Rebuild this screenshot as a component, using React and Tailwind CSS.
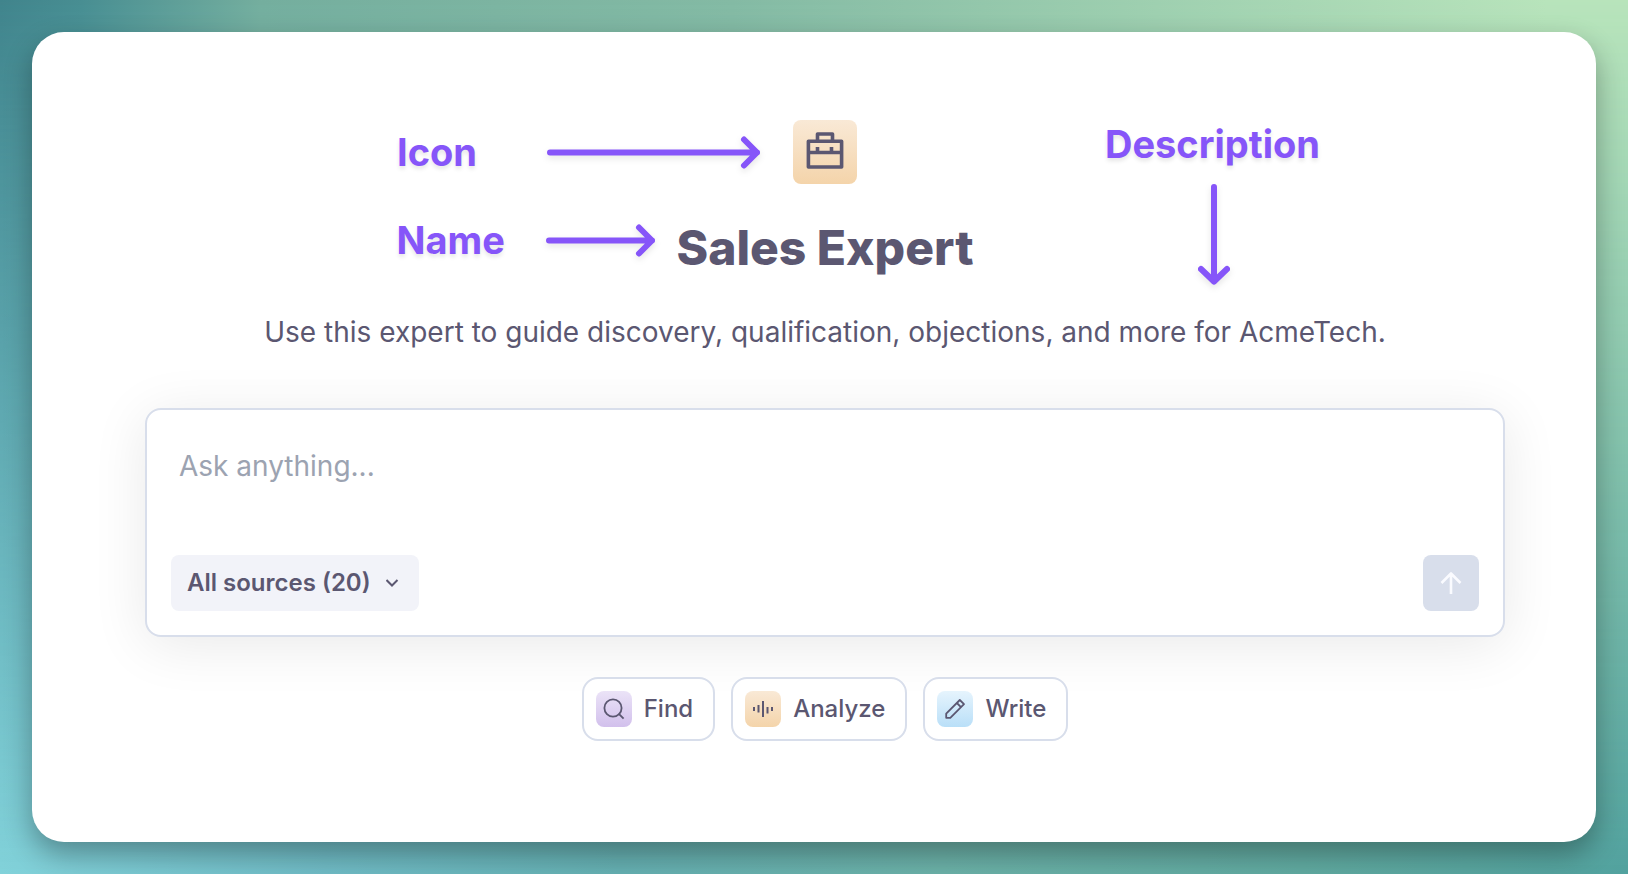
import React, { useState } from 'react'

function RightArrow({ className, length }) {
  const tip = length - 4
  return (
    <svg
      className={className}
      width={length}
      height="34"
      viewBox={`0 0 ${length} 34`}
      fill="none"
      stroke="#8655f9"
      strokeWidth="6"
      strokeLinecap="round"
      strokeLinejoin="round"
      aria-hidden="true"
    >
      <path d={`M3 17.5H${tip}M${tip - 13} 4.5L${tip} 17.5L${tip - 13} 30.5`} />
    </svg>
  )
}

function DownArrow({ className }) {
  return (
    <svg
      className={className}
      width="34"
      height="102"
      viewBox="0 0 34 102"
      fill="none"
      stroke="#8655f9"
      strokeWidth="6"
      strokeLinecap="round"
      strokeLinejoin="round"
      aria-hidden="true"
    >
      <path d="M17 3V97.5M4 85L17 97.5L30 85" />
    </svg>
  )
}

function BriefcaseIcon() {
  return (
    <svg width="40" height="40" viewBox="0 0 40 40" fill="none" stroke="#5b5771" strokeWidth="3.6" strokeLinejoin="round" aria-hidden="true">
      <path d="M3.4 9.2H36.6V35H3.4Z" />
      <path d="M12.5 9V2H27.5V9" />
      <path d="M3.2 20.5H36.8M12.5 15V20.5M26.5 15V20.5" />
    </svg>
  )
}

function SearchIcon() {
  return (
    <svg width="24" height="24" viewBox="0 0 24 24" fill="none" stroke="#5b5771" strokeWidth="1.8" aria-hidden="true">
      <circle cx="11" cy="11" r="8.6" />
      <path d="M16.6 16.6L21.6 21.6" />
    </svg>
  )
}

function WaveIcon() {
  return (
    <svg width="24" height="24" viewBox="0 0 24 24" fill="none" stroke="#5b5771" strokeWidth="2" aria-hidden="true">
      <path d="M3 10V14M7.5 8V15.5M12 4V20M16.5 10V16.5M21 10V14" />
    </svg>
  )
}

function PencilIcon() {
  return (
    <svg width="24" height="24" viewBox="0 0 24 24" fill="none" stroke="#5b5771" strokeWidth="1.8" strokeLinejoin="round" aria-hidden="true">
      <path d="M3.2 16.7L16.8 3L21 7.2L7.3 20.8H3.2Z" />
      <path d="M13.8 6L18 10.2" />
    </svg>
  )
}

const actions = [
  { label: 'Find', icon: SearchIcon, tile: 'from-[#ebe3f7] to-[#d2c0ec]' },
  { label: 'Analyze', icon: WaveIcon, tile: 'from-[#f9e9d6] to-[#f4d4aa]' },
  { label: 'Write', icon: PencilIcon, tile: 'from-[#e6f4fd] to-[#b9dff8]' },
]

function Hero() {
  const row = 'grid grid-cols-[minmax(0,1fr)_auto_minmax(0,1fr)]'
  const note = 'text-[38px] leading-12 font-bold text-[#8655f9] text-shadow-[0_3px_4px_rgb(0_0_0/0.1)]'
  const arrow = 'shrink-0 drop-shadow-[0_3px_3px_rgb(0_0_0/0.1)]'

  return (
    <header className="flex flex-col">
      <div className={row}>
        <div className="flex items-center justify-end pr-8">
          <span className={`w-[150px] ${note}`}>Icon</span>
          <RightArrow className={arrow} length={214} />
        </div>
        <div className="flex size-16 items-center justify-center rounded-lg bg-linear-to-b from-[#f9e9d6] to-[#f4d4aa]">
          <BriefcaseIcon />
        </div>
        <div className="pl-[248px]">
          <span className={note}>Description</span>
        </div>
      </div>

      <div className={`min-h-26 ${row}`}>
        <div className="flex items-center justify-end pt-2 pr-5">
          <span className={`w-[150px] ${note}`}>Name</span>
          <RightArrow className={arrow} length={110} />
        </div>
        <h1 className="pt-8 text-5xl leading-16 font-extrabold text-[#5b5771]">Sales Expert</h1>
        <div className="pl-[223px]">
          <DownArrow className={arrow} />
        </div>
      </div>

      <p className="mt-6 text-center text-[28px] leading-10 text-[#5b5771]">
        Use this expert to guide discovery, qualification, objections, and more for AcmeTech.
      </p>
    </header>
  )
}

function PromptBox() {
  const [prompt, setPrompt] = useState('')

  return (
    <form
      className="mt-14 flex flex-col rounded-2xl border-2 border-[#d8deeb] bg-white p-6 shadow-[0_8px_56px_rgb(0_0_0/0.09)]"
      onSubmit={(e) => e.preventDefault()}
    >
      <textarea
        aria-label="Ask anything"
        className="h-[121px] resize-none px-2 pt-3 text-[28px] leading-10 text-[#5b5771] outline-none placeholder:text-[#9ca3b1]"
        placeholder="Ask anything..."
        value={prompt}
        onChange={(e) => setPrompt(e.target.value)}
      />
      <div className="flex items-center justify-between">
        <button type="button" className="flex h-14 items-center gap-[15px] rounded-lg bg-[#f2f3f9] pr-5 pl-4 text-2xl font-semibold text-[#5b5771]">
          All sources (20)
          <svg width="13" height="16" viewBox="0 0 13 16" fill="none" stroke="#5b5771" strokeWidth="2" aria-hidden="true">
            <path d="M0.5 5L6 10.5L11.5 5" />
          </svg>
        </button>
        <button type="submit" aria-label="Send" className="flex size-14 items-center justify-center rounded-lg bg-[#d8deeb]">
          <svg width="24" height="24" viewBox="0 0 24 24" fill="none" stroke="#fafbff" strokeWidth="2.6" strokeLinejoin="round" aria-hidden="true">
            <path d="M12 23V3M2.5 12L12 2.5L21.5 12" />
          </svg>
        </button>
      </div>
    </form>
  )
}

export default function App() {
  return (
    <div className="relative isolate flex min-h-screen bg-[linear-gradient(to_right,#82d2da_0%,#70bcc6_20%,#65b0b2_38%,#6bb1a8_58%,#60aaa1_80%,#52a29f_100%)] p-8 font-[Inter,sans-serif]">
      {/* Upper half of the backdrop, fading into the lower colours */}
      <div className="absolute inset-0 -z-10 bg-[linear-gradient(to_right,#40848c_0%,#488e92_5%,#74ae9e_16%,#84baa4_45%,#b8e4bb_95%)] mask-linear-[to_bottom,black,transparent]" />

      <main className="flex-1 rounded-[32px] bg-white pt-22 pr-[91px] pb-24 pl-[113px] shadow-[0_12px_28px_rgb(0_0_0/0.32)]">
        <Hero />
        <PromptBox />
        <div className="mt-10 flex justify-center gap-4">
          {actions.map(({ label, icon: Icon, tile }) => (
            <button
              key={label}
              type="button"
              className="flex h-16 items-center gap-3 rounded-2xl border-2 border-[#d8deeb] bg-white pr-5 pl-3 text-2xl font-medium text-[#5b5771]"
            >
              <span className={`flex size-9 items-center justify-center rounded-lg bg-linear-to-b ${tile}`}>
                <Icon />
              </span>
              {label}
            </button>
          ))}
        </div>
      </main>
    </div>
  )
}
